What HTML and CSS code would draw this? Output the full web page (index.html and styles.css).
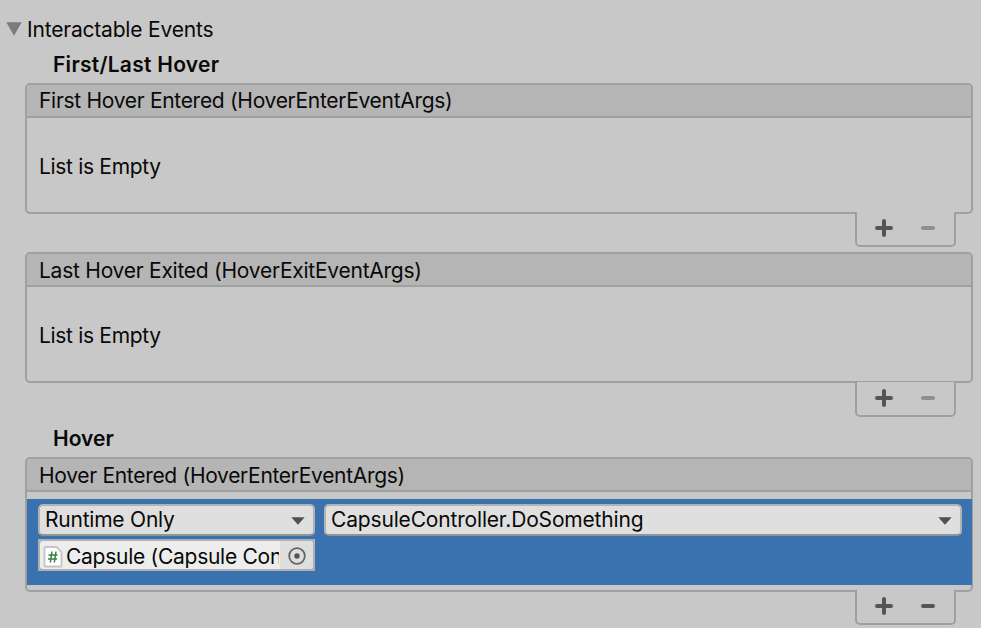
FILE: index.html
```
<!DOCTYPE html>
<html lang="en">
<head>
<meta charset="utf-8">
<title>Interactable Events</title>
<link rel="stylesheet" href="styles.css">
</head>
<body>
<main class="inspector">
  <div class="foldout">
    <svg class="fold-arrow" width="16" height="14" viewBox="0 0 16 14"><path d="M0.3 0.3H15.7L8 13.8Z"/></svg>
    <span class="t-foldout">Interactable Events</span>
  </div>
  <h2 class="group-title first"><span class="t-first">First/Last Hover</span></h2>

  <section class="event">
    <div class="panel">
      <header class="panel-head"><span class="t-enter">First Hover Entered (HoverEnterEventArgs)</span></header>
      <div class="panel-empty"><span class="t-empty">List is Empty</span></div>
    </div>
    <footer class="buttons">
      <svg class="plus" width="18" height="18" viewBox="0 0 18 18"><path d="M2 9H16M9 2V16"/></svg>
      <svg class="minus disabled" width="14" height="4" viewBox="0 0 14 4"><path d="M2 2H12"/></svg>
    </footer>
  </section>

  <section class="event second">
    <div class="panel">
      <header class="panel-head low"><span class="t-exit">Last Hover Exited (HoverExitEventArgs)</span></header>
      <div class="panel-empty"><span class="t-empty">List is Empty</span></div>
    </div>
    <footer class="buttons lined">
      <svg class="plus" width="18" height="18" viewBox="0 0 18 18"><path d="M2 9H16M9 2V16"/></svg>
      <svg class="minus disabled" width="14" height="4" viewBox="0 0 14 4"><path d="M2 2H12"/></svg>
    </footer>
  </section>

  <h2 class="group-title"><span class="t-hover">Hover</span></h2>

  <section class="event">
    <div class="panel">
      <header class="panel-head low"><span class="t-enter">Hover Entered (HoverEnterEventArgs)</span></header>
      <div class="listener">
        <div class="dropdown"><span class="t-runtime">Runtime Only</span><svg width="14" height="8" viewBox="0 0 14 8"><path d="M0.3 0.3H13.7L7 7.8Z"/></svg></div>
        <div class="dropdown"><span class="t-method">CapsuleController.DoSomething</span><svg width="14" height="8" viewBox="0 0 14 8"><path d="M0.3 0.3H13.7L7 7.8Z"/></svg></div>
        <div class="object-field">
          <div class="object-inner">
            <svg class="script-icon" width="20" height="22" viewBox="0 0 20 22">
              <path class="sheet" d="M2.5 1H13.5L18.5 6V19.5Q18.5 20.5 17.5 20.5H2.5Q1.5 20.5 1.5 19.5V2Q1.5 1 2.5 1Z"/>
              <path class="hash" d="M9 5.5L7.3 16.5M13 5.5L11.3 16.5M5.5 9H14.5M5 13H14"/>
            </svg>
            <span class="object-name"><span class="t-object">Capsule (Capsule Con</span></span>
            <span class="picker"><svg width="18" height="18" viewBox="0 0 18 18"><circle class="ring" cx="9" cy="9" r="7.8"/><circle class="dot" cx="9" cy="9" r="2.7"/></svg></span>
          </div>
        </div>
      </div>
    </div>
    <footer class="buttons">
      <svg class="plus" width="18" height="18" viewBox="0 0 18 18"><path d="M2 9H16M9 2V16"/></svg>
      <svg class="minus" width="14" height="4" viewBox="0 0 14 4"><path d="M2 2H12"/></svg>
    </footer>
  </section>
</main>
</body>
</html>
```
FILE: styles.css
```
* { box-sizing: border-box; }

body {
  margin: 0;
  background: #c8c8c8;
  color: #090909;
  font: 400 21px/26px Inter, "Liberation Sans", sans-serif;
  white-space: nowrap;
  overflow: hidden;
}

svg { display: block; flex: none; }

.inspector {
  width: 981px;
  height: 628px;
  padding: 16px 8px 0 25px;
  overflow: hidden;
}

.foldout {
  display: flex;
  align-items: center;
  gap: 5px;
  height: 28px;
  margin-left: -19px;
}

.fold-arrow { fill: #7b7b7b; margin-top: -2px; }

.t-foldout { letter-spacing: -0.19px; }
.t-first { letter-spacing: 0.27px; }
.t-enter { letter-spacing: -0.3px; }
.t-exit { letter-spacing: -0.25px; }
.t-empty { letter-spacing: -0.32px; }
.t-runtime { letter-spacing: -0.22px; }
.t-method { letter-spacing: -0.17px; }
.t-object { letter-spacing: -0.27px; }

.group-title {
  display: flex;
  align-items: center;
  height: 40px;
  margin: 0;
  padding: 3px 0 0 28px;
  font-size: 21px;
  font-weight: 600;
}

.group-title.first { height: 39px; padding-top: 3px; }

.event.second { margin-top: 5px; }

.panel {
  border: 2px solid #a0a0a0;
  border-radius: 5px;
}

.panel-head {
  height: 33px;
  padding: 3px 12px 0;
  background: #b5b5b5;
  border-bottom: 2px solid #a0a0a0;
  border-radius: 3px 3px 0 0;
}

.panel-head.low { padding-top: 4px; }

.panel-empty {
  display: flex;
  align-items: center;
  height: 94px;
  padding: 4px 12px 0;
}

.buttons {
  display: flex;
  align-items: center;
  gap: 28px;
  width: 101px;
  height: 35px;
  margin: -2px 17px 0 auto;
  padding: 0 0 1px 18px;
  position: relative;
  background: #c8c8c8;
  border: solid #a0a0a0;
  border-width: 0 2px 2px;
  border-radius: 0 0 5px 5px;
}

.buttons.lined { height: 36px; border-top-width: 1px; }

.plus, .minus {
  fill: none;
  stroke: #555;
  stroke-width: 4;
  stroke-linecap: round;
}

.minus.disabled { stroke: #909090; }

.listener {
  display: grid;
  grid-template-columns: 277px 638px;
  grid-template-rows: 32px 32px;
  column-gap: 9px;
  row-gap: 3px;
  height: 86px;
  margin: 7px -1px 5px 0;
  padding: 5px 0 0 11px;
  background: #3a72b0;
}

.dropdown {
  display: flex;
  align-items: center;
  justify-content: space-between;
  padding: 0 8px 0 5px;
  background: #dfdfdf;
  border: 2px solid #b2b2b2;
  border-bottom-color: #939393;
  border-radius: 5px;
}

.dropdown svg { fill: #50514b; margin-top: 2px; }

.object-field { padding: 2px; background: #b0b0b0; }

.object-inner {
  display: flex;
  align-items: center;
  height: 28px;
  padding-left: 3px;
  background: #ededed;
  border-radius: 3px;
  overflow: hidden;
}

.script-icon { margin-top: 3px; }
.sheet { fill: #fff; stroke: #c4c4c4; stroke-width: 1.8; }
.hash { fill: none; stroke: #35833b; stroke-width: 1.5; }

.object-name {
  width: 214px;
  margin: 3px 0 0 3px;
  overflow: hidden;
}

.picker {
  display: flex;
  align-items: center;
  width: 33px;
  height: 28px;
  margin-left: 1px;
  padding: 1px 0 0 8px;
  background: #dedede;
}

.ring { fill: none; stroke: #666; stroke-width: 1.8; }
.dot { fill: #555; }
```
